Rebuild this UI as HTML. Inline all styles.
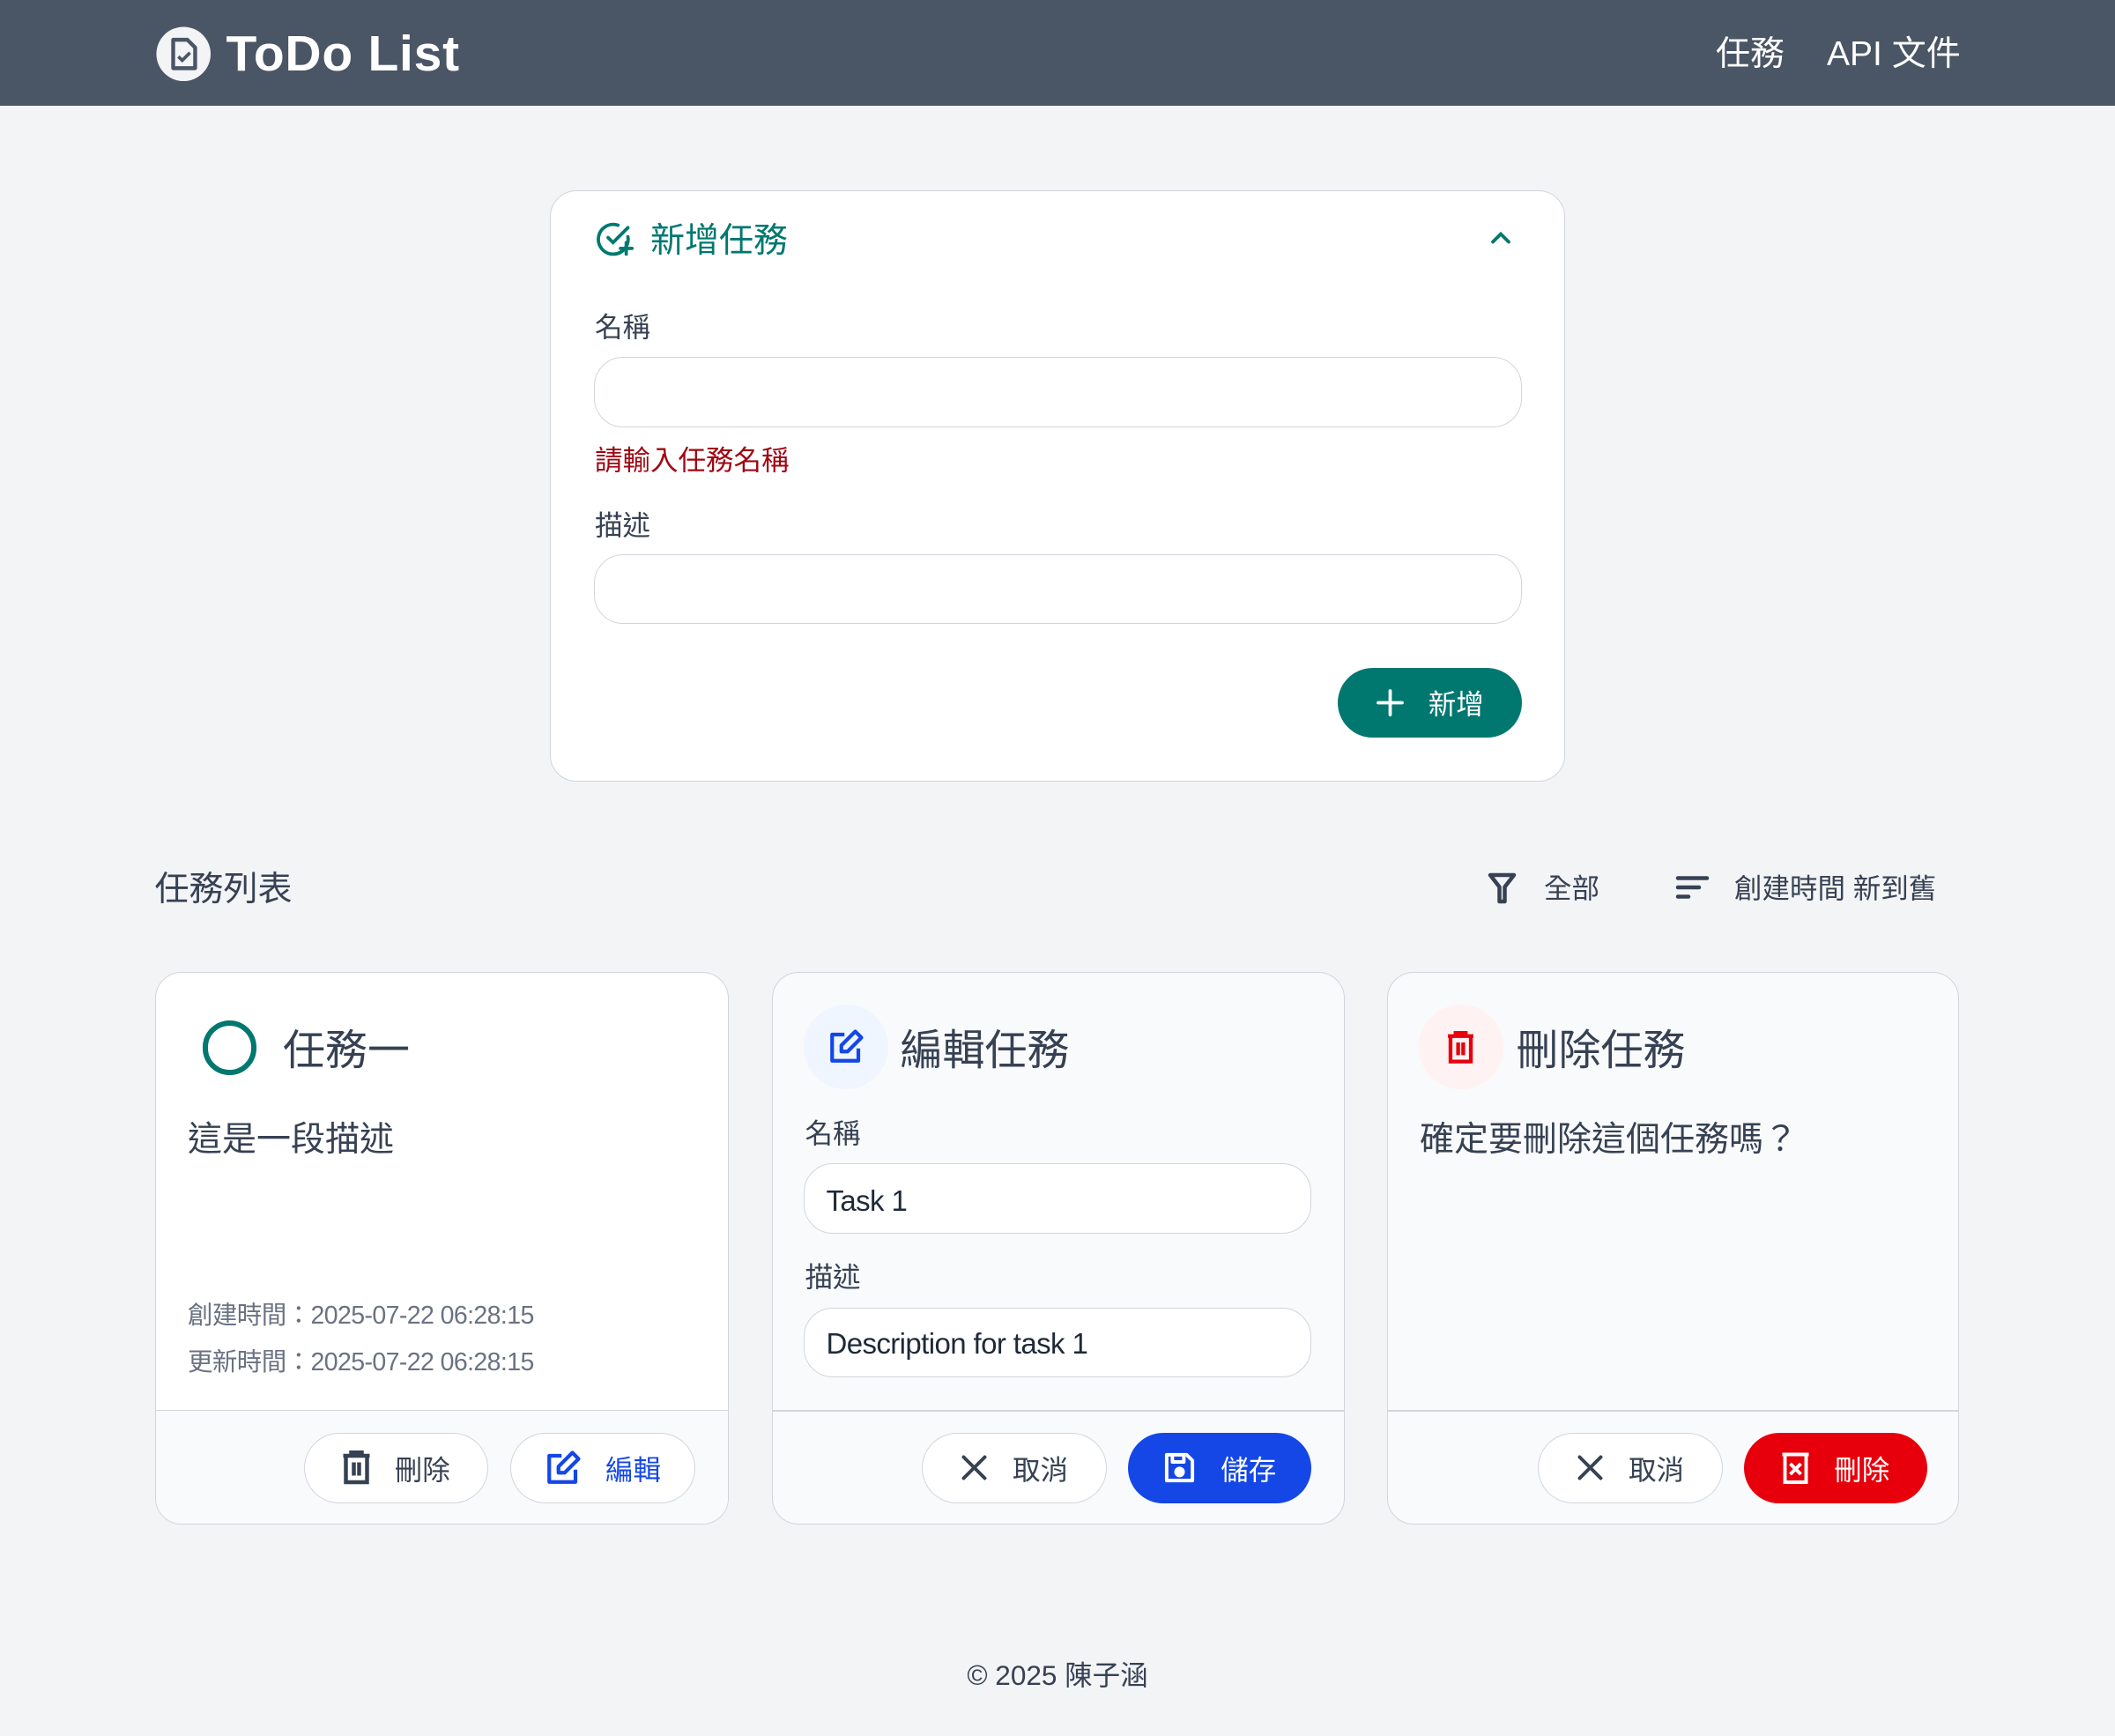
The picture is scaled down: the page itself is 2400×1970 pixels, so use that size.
<!DOCTYPE html>
<html><head><meta charset="utf-8"><style>
html{zoom:1.5}
*{box-sizing:border-box;margin:0;padding:0}
body{width:1600px;height:1313px;background:#f3f4f6;font-family:"Liberation Sans","Noto Sans CJK TC",sans-serif;color:#364153;position:relative;overflow:hidden}
.a{position:absolute}
.hdr{left:0;top:0;width:1600px;height:80px;background:#4a5565}
.card{background:#fff;border:1px solid #d1d5dc;border-radius:20px}
.inp{border:1px solid #d1d5dc;border-radius:22px;background:#fff}
.btn{border-radius:27px;display:flex;align-items:center;justify-content:center;gap:18px;font-size:21px;height:53px}
.wb{background:#fff;border:1px solid #d1d5dc}
.t{white-space:nowrap;line-height:1}
svg{display:block}
</style></head><body>
<div class="a hdr"></div>
<svg class="a" style="left:117px;top:19px" width="43" height="43" viewBox="0 0 44 44"><circle cx="22" cy="22" r="21" fill="#f3f4f6"/><path d="M14 11h11l6 6v16H14z" fill="none" stroke="#4a5565" stroke-width="3" stroke-linejoin="round"/><path d="M18 24l3 3 6-6" fill="none" stroke="#4a5565" stroke-width="2.5"/></svg>
<div class="a t" style="left:171px;top:22px;font-size:38px;font-weight:bold;color:#fff;letter-spacing:0.5px">ToDo List</div>
<div class="a t" style="left:1298px;top:28px;font-size:26px;color:#fff">任務</div>
<div class="a t" style="left:1382px;top:28px;font-size:26px;color:#fff">API 文件</div>

<div class="a card" style="left:416px;top:144px;width:768px;height:447px"></div>
<svg class="a" style="left:450px;top:166px" width="30" height="30" viewBox="0 0 24 24" fill="none" stroke="#00786f" stroke-width="2" stroke-linecap="round"><path d="M20 10.5A9 9 0 1 1 14 3.5"/><path d="M8 11l3 3 9-9"/><path d="M19 14v7M15.5 17.5h7"/></svg>
<div class="a t" style="left:492px;top:169px;font-size:26px;color:#00786f">新增任務</div>
<svg class="a" style="left:1125px;top:172px" width="20" height="16" viewBox="0 0 20 16" fill="none" stroke="#00786f" stroke-width="2.5" stroke-linecap="round"><path d="M4 11l6-6 6 6"/></svg>
<div class="a t" style="left:450px;top:237px;font-size:21px">名稱</div>
<div class="a inp" style="left:449px;top:270px;width:702px;height:53px"></div>
<div class="a t" style="left:450px;top:338px;font-size:21px;color:#9f0712">請輸入任務名稱</div>
<div class="a t" style="left:450px;top:387px;font-size:21px">描述</div>
<div class="a inp" style="left:449px;top:419px;width:702px;height:53px"></div>
<div class="a btn" style="left:1012px;top:505px;width:139px;background:#00786f;color:#fff"><svg width="22" height="22" viewBox="0 0 22 22" stroke="#fff" stroke-width="2.5" stroke-linecap="round"><path d="M11 2v18M2 11h18"/></svg><span>新增</span></div>

<div class="a t" style="left:117px;top:660px;font-size:26px">任務列表</div>
<svg class="a" style="left:1125px;top:660px" width="22" height="24" viewBox="0 0 22 24" fill="none" stroke="#364153" stroke-width="3" stroke-linejoin="round" stroke-linecap="round"><path d="M2 2h18l-7 9v11l-4 0V11z"/></svg>
<div class="a t" style="left:1168px;top:662px;font-size:21px">全部</div>
<svg class="a" style="left:1267px;top:661px" width="26" height="20" viewBox="0 0 26 20" stroke="#364153" stroke-width="3" stroke-linecap="round"><path d="M2 3h22M2 10h16M2 17h8"/></svg>
<div class="a t" style="left:1312px;top:662px;font-size:21px">創建時間 新到舊</div>

<!-- card 1 -->
<div class="a card" style="left:117px;top:735px;width:434px;height:418px;overflow:hidden"><div class="a" style="left:0;top:331px;width:434px;height:87px;background:#f9fafb;border-top:1px solid #d1d5dc"></div></div>
<div class="a" style="left:153px;top:772px;width:41px;height:41px;border:4px solid #00786f;border-radius:50%"></div>
<div class="a t" style="left:214px;top:779px;font-size:32px">任務一</div>
<div class="a t" style="left:142px;top:849px;font-size:26px">這是一段描述</div>
<div class="a t" style="left:142px;top:986px;font-size:19px;color:#6a7282;letter-spacing:-0.4px">創建時間：2025-07-22 06:28:15</div>
<div class="a t" style="left:142px;top:1021px;font-size:19px;color:#6a7282;letter-spacing:-0.4px">更新時間：2025-07-22 06:28:15</div>
<div class="a btn wb" style="left:230px;top:1084px;width:139px"><svg width="22" height="26" viewBox="0 0 22 26" fill="none" stroke="#364153" stroke-width="3"><path d="M1 4h20M7 4V1h8v3M3 4v20h16V4M9 9v10M13 9v10"/></svg><span>刪除</span></div>
<div class="a btn wb" style="left:386px;top:1084px;width:140px;color:#1447e6"><svg width="28" height="28" viewBox="0 0 24 24" fill="none" stroke="#1447e6" stroke-width="2.4" stroke-linejoin="round"><path d="M11 4H3v17h17v-8"/><path d="M18 2l4 4-9 9H9v-4z"/></svg><span>編輯</span></div>

<!-- card 2 -->
<div class="a card" style="left:584px;top:735px;width:433px;height:418px;background:#f9fafb;overflow:hidden"><div class="a" style="left:0;top:331px;width:433px;height:1px;background:#d1d5dc"></div></div>
<div class="a" style="left:608px;top:760px;width:64px;height:64px;border-radius:50%;background:#eff6ff"></div>
<svg class="a" style="left:626px;top:778px" width="28" height="28" viewBox="0 0 24 24" fill="none" stroke="#1447e6" stroke-width="2.4" stroke-linejoin="round"><path d="M11 4H3v17h17v-8"/><path d="M18 2l4 4-9 9H9v-4z"/></svg>
<div class="a t" style="left:681px;top:779px;font-size:32px">編輯任務</div>
<div class="a t" style="left:609px;top:847px;font-size:21px">名稱</div>
<div class="a inp" style="left:608px;top:880px;width:384px;height:53px"></div>
<div class="a t" style="left:625px;top:897px;font-size:22px;color:#1e2939;letter-spacing:-0.4px">Task 1</div>
<div class="a t" style="left:609px;top:956px;font-size:21px">描述</div>
<div class="a inp" style="left:608px;top:989px;width:384px;height:53px"></div>
<div class="a t" style="left:625px;top:1005px;font-size:22px;color:#1e2939;letter-spacing:-0.4px">Description for task 1</div>
<div class="a btn wb" style="left:697px;top:1084px;width:140px"><svg width="22" height="22" viewBox="0 0 22 22" stroke="#364153" stroke-width="2.6" stroke-linecap="round"><path d="M3 3l16 16M19 3L3 19"/></svg><span>取消</span></div>
<div class="a btn" style="left:853px;top:1084px;width:139px;background:#1447e6;color:#fff"><svg width="26" height="26" viewBox="0 0 24 24" fill="none" stroke="#fff" stroke-width="2.4" stroke-linejoin="round"><path d="M3 3h14l4 4v14H3z"/><path d="M7 3v5h8V3"/><circle cx="12" cy="15" r="2.5" fill="#fff"/></svg><span>儲存</span></div>

<!-- card 3 -->
<div class="a card" style="left:1049px;top:735px;width:433px;height:418px;background:#f9fafb;overflow:hidden"><div class="a" style="left:0;top:331px;width:433px;height:1px;background:#d1d5dc"></div></div>
<div class="a" style="left:1073px;top:760px;width:64px;height:64px;border-radius:50%;background:#fef2f2"></div>
<svg class="a" style="left:1094px;top:780px" width="22" height="25" viewBox="0 0 22 26" fill="none" stroke="#e7000b" stroke-width="3"><path d="M1 4h20M7 4V1h8v3M3 4v20h16V4M9 9v10M13 9v10"/></svg>
<div class="a t" style="left:1147px;top:779px;font-size:32px">刪除任務</div>
<div class="a t" style="left:1074px;top:849px;font-size:26px">確定要刪除這個任務嗎？</div>
<div class="a btn wb" style="left:1163px;top:1084px;width:140px"><svg width="22" height="22" viewBox="0 0 22 22" stroke="#364153" stroke-width="2.6" stroke-linecap="round"><path d="M3 3l16 16M19 3L3 19"/></svg><span>取消</span></div>
<div class="a btn" style="left:1319px;top:1084px;width:139px;background:#e7000b;color:#fff"><svg width="22" height="26" viewBox="0 0 22 26" fill="none" stroke="#fff" stroke-width="2.6"><path d="M1 3h20M3 3v21h16V3M7 10l8 8M15 10l-8 8"/></svg><span>刪除</span></div>

<div class="a t" style="left:0;width:1600px;text-align:center;top:1257px;font-size:21px">© 2025 陳子涵</div>
</body></html>
